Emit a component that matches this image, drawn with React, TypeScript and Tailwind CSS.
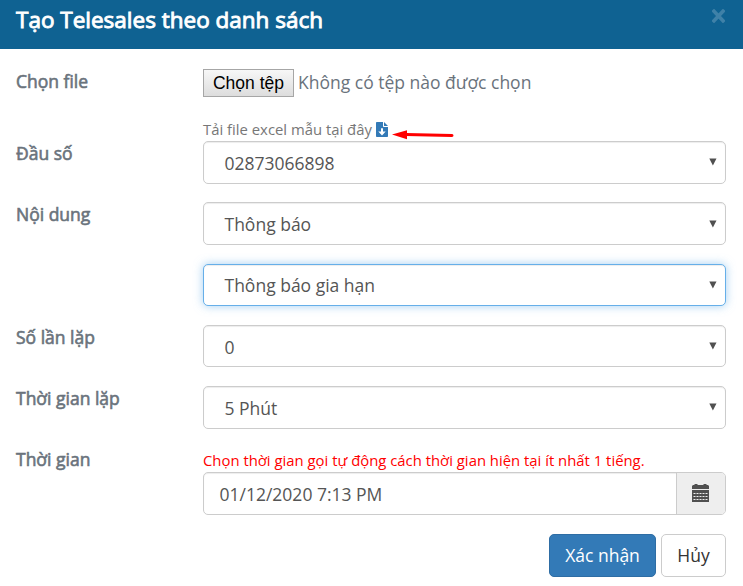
import React from "react";

const labelClass =
  "w-[187px] shrink-0 text-[17.5px] leading-[25px] text-[#6a737c] [-webkit-text-stroke:0.6px_#6a737c]";

const boxClass =
  "flex h-[42.5px] items-center rounded-[5px] border bg-white text-[17.5px] text-[#555]";

function SelectRow({
  label,
  value,
  focused = false,
}: {
  label: string;
  value: string;
  focused?: boolean;
}) {
  return (
    <div className="mb-[18.75px] flex">
      <div className={labelClass}>{label}</div>
      <div
        className={`${boxClass} w-[523px] justify-between pl-[20.5px] pr-[8px] ${
          focused
            ? "border-[#66afe9] shadow-[inset_0_1px_1px_rgba(0,0,0,0.075),0_0_10px_rgba(102,175,233,0.6)]"
            : "border-[#ccc] shadow-[inset_0_1px_1px_rgba(0,0,0,0.075)]"
        }`}
      >
        <span className="pt-[1px]">{value}</span>
        <svg className="h-[8px] w-[8px]" viewBox="0 0 8 8" fill="#505050">
          <path d="M0.3 0.5h7.2L3.9 7.5z" />
        </svg>
      </div>
    </div>
  );
}

function DownloadFileIcon() {
  return (
    <svg className="ml-[4px] h-[15px] w-[12px]" viewBox="0 0 12 15">
      <path
        fill="#337ab7"
        fillRule="evenodd"
        d="M0.8 0H7v4.2c0 .5.3.8.8.8H12v9.2c0 .5-.3.8-.8.8H.8c-.5 0-.8-.3-.8-.8V.8C0 .3.3 0 .8 0zM5 6.2v3.2H2.3L6 13.4l3.7-4H7V6.2z"
      />
      <path fill="#337ab7" d="M8 0l4 4H8z" />
    </svg>
  );
}

function CalendarIcon() {
  return (
    <svg className="mr-[1px] mb-[1px] h-[18px] w-[17px]" viewBox="0 0 17 18">
      <path
        fill="#505050"
        d="M1 1h1.5V0h3v1h6V0h3v1H16l1 1v3H0V2zM0 6h17v12H0z"
      />
      <path
        stroke="#eee"
        strokeWidth="1"
        strokeDasharray="2 1"
        d="M1.5 9.5h14M1.5 12.5h14M1.5 15.5h14"
        fill="none"
      />
    </svg>
  );
}

export default function App() {
  return (
    <div className="relative h-[586px] w-[743px] overflow-hidden bg-white font-['Open_Sans','Noto_Sans',sans-serif]">
      <header className="flex h-[49px] items-start justify-between bg-[#0f6292] pl-[16px] pr-[18px]">
        <h1 className="pt-[5px] text-[22.5px] leading-[30px] text-white [-webkit-text-stroke:0.9px_white]">
          Tạo Telesales theo danh sách
        </h1>
        <svg className="mt-[9px] h-[14px] w-[13px]" viewBox="0 0 13 14">
          <path d="M2 2.2l9 9.6M11 2.2l-9 9.6" stroke="#3f81a8" strokeWidth="3.6" strokeLinecap="square" />
        </svg>
      </header>

      <main className="pl-[16px] pt-[20px]">
        <div className="flex h-[72.15px]">
          <div className={labelClass}>Chọn file</div>
          <div>
            <div className="flex h-[28px] items-center">
              <button className="h-[28px] w-[91px] border border-[#a6a6a6] bg-linear-to-b from-[#f7f7f7] to-[#dddddd] font-['Liberation_Sans',sans-serif] text-[17.5px] leading-[24px] whitespace-nowrap text-black">
                Chọn tệp
              </button>
              <span className="-mt-[2px] ml-[4px] text-[17.5px] text-[#6a737c]">
                Không có tệp nào được chọn
              </span>
            </div>
            <div className="mt-[22px] flex h-[20px] items-center text-[14.875px] text-[#777]">
              <span>Tải file excel mẫu tại đây</span>
              <DownloadFileIcon />
              <svg className="mt-[11px] ml-[4px] h-[10px] w-[62px]" viewBox="0 0 62 10">
                <path d="M14 4.5L60 5.5" stroke="#f00" strokeWidth="3" strokeLinecap="round" />
                <path d="M0 4.5L15 0.3v8.9z" fill="#f00" />
              </svg>
            </div>
          </div>
        </div>

        <SelectRow label="Đầu số" value="02873066898" />
        <SelectRow label="Nội dung" value="Thông báo" />
        <SelectRow label="" value="Thông báo gia hạn" focused />
        <SelectRow label="Số lần lặp" value="0" />
        <SelectRow label="Thời gian lặp" value="5 Phút" />

        <div className="flex">
          <div className={labelClass}>Thời gian</div>
          <div className="w-[523px]">
            <div className="flex h-[25px] items-center text-[14.875px] text-[#f00]">
              Chọn thời gian gọi tự động cách thời gian hiện tại ít nhất 1 tiếng.
            </div>
            <div
              className={`${boxClass} overflow-hidden border-[#ccc] shadow-[inset_0_1px_1px_rgba(0,0,0,0.075)]`}
            >
              <span className="flex-1 pl-[15.5px]">01/12/2020 7:13 PM</span>
              <span className="flex h-full w-[49px] items-center justify-center border-l border-[#ccc] bg-[#eee]">
                <CalendarIcon />
              </span>
            </div>
          </div>
        </div>

        <div className="mt-[19.1px] flex justify-end gap-[5px] pr-[17px] text-[17.5px]">
          <button className="h-[43px] w-[107px] rounded-[5px] border border-[#2e6da4] bg-[#337ab7] text-white">
            Xác nhận
          </button>
          <button className="h-[43px] w-[65px] rounded-[5px] border border-[#ccc] bg-white text-[#333]">
            Hủy
          </button>
        </div>
      </main>
    </div>
  );
}
